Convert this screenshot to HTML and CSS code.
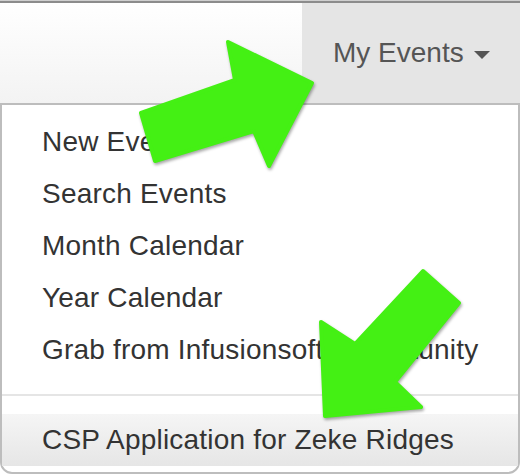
FILE: index.html
```html
<!DOCTYPE html>
<html lang="en">
<head>
    <meta charset="UTF-8">
    <title>My Events</title>
    <link rel="stylesheet" href="styles.css">
</head>
<body>
    <div class="page">
        <div class="navbar">
            <div class="navbar-fill"></div>
            <div class="dropdown-toggle">My Events <span class="caret"></span></div>
        </div>

        <ul class="dropdown-menu">
            <li><a href="#">New Event</a></li>
            <li><a href="#">Search Events</a></li>
            <li><a href="#">Month Calendar</a></li>
            <li><a href="#">Year Calendar</a></li>
            <li><a href="#">Grab from Infusionsoft Opportunity</a></li>
            <li class="divider"></li>
            <li class="active"><a href="#">CSP Application for Zeke Ridges</a></li>
        </ul>

        <!-- green callout arrows drawn over the menu -->
        <svg class="arrows" width="522" height="476" viewBox="0 0 522 476">
            <path class="arrow" d="M141,113 L235,80 L228,42 L312,83 L269,166 L254,131 L155,161 Z"/>
            <path class="arrow" d="M423,271 L459,303 L395,382 L421,407 L325,416 L321,322 L355,344 Z"/>
        </svg>
    </div>
</body>
</html>
```

FILE: styles.css
```css
body {
    margin: 0;
    background: #fff;
    font-family: "Liberation Sans", Arial, Helvetica, sans-serif;
}
.page {
    position: relative;
    width: 522px;
    height: 476px;
    overflow: hidden;
}
.navbar {
    display: flex;
    width: 520px;
    height: 100px;
    margin-top: 1px;
    border-top: 2px solid #8c8c8c;
    box-shadow: 0 -1px 0 #cfcfcf;
}
.navbar-fill {
    flex: 1;
    background: linear-gradient(#ffffff, #f3f3f3);
}
.dropdown-toggle {
    width: 218px;
    box-sizing: border-box;
    padding-left: 31px;
    background: #e5e5e5;
    color: #555;
    font-size: 28px;
    line-height: 100px;
    white-space: nowrap;
}
.caret {
    display: inline-block;
    width: 0;
    height: 0;
    margin-left: 3px;
    vertical-align: middle;
    border-top: 8px solid #555;
    border-left: 8px solid transparent;
    border-right: 8px solid transparent;
}
.dropdown-menu {
    list-style: none;
    margin: 0;
    width: 520px;
    box-sizing: border-box;
    padding: 11px 0 6px;
    border: 2px solid #bdbdbd;
    border-radius: 0 0 12px 12px;
    background: #fff;
}
.dropdown-menu a {
    display: block;
    padding: 6px 40px;
    line-height: 40px;
    font-size: 28px;
    letter-spacing: 0.2px;
    color: #333;
    text-decoration: none;
    white-space: nowrap;
}
.dropdown-menu .divider {
    height: 2px;
    margin: 18px 0;
    background: #e5e5e5;
}
.dropdown-menu .active a {
    background: linear-gradient(#f5f5f5, #e6e6e6);
}
.arrows {
    position: absolute;
    top: 0;
    left: 0;
    pointer-events: none;
    filter: drop-shadow(1px 2px 1.5px rgba(0,0,0,0.35));
}
.arrow {
    fill: #44f014;
    stroke: #44f014;
    stroke-width: 4;
    stroke-linejoin: round;
}
```
